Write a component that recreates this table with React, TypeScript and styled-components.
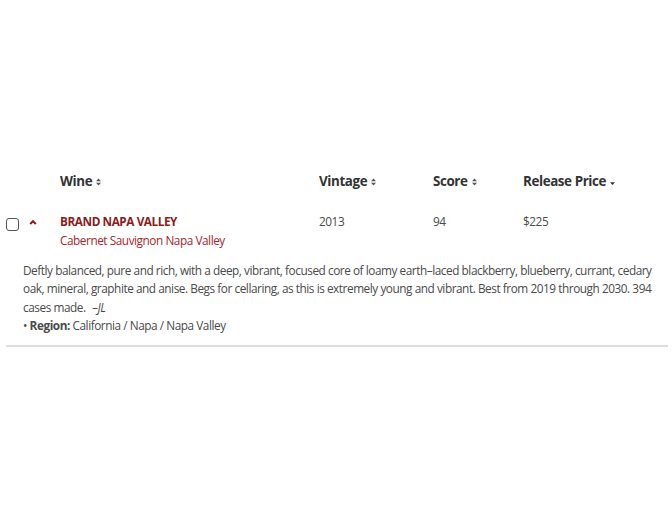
import React from 'react'
import styled, { createGlobalStyle } from 'styled-components'

const GlobalStyle = createGlobalStyle`
  html, body {
    margin: 0;
    padding: 0;
    background: #ffffff;
    font-family: 'Open Sans', 'Liberation Sans', sans-serif;
  }
`

const Page = styled.div`
  width: 672px;
  height: 510px;
  padding: 168px 4px 0 6px;
  box-sizing: border-box;
`

const Row = styled.div`
  display: grid;
  grid-template-columns: 23px 31px 259px 114px 90px 1fr;
  align-items: start;
`

const HeaderRow = styled(Row)`
  height: 40px;
`

const HeadCell = styled.div`
  font-size: 13.4px;
  letter-spacing: -0.4px;
  font-weight: 700;
  color: #333333;
  line-height: 26px;
  display: flex;
  align-items: center;
  white-space: nowrap;
`

const SortIcon = styled.svg`
  margin-left: 4px;
  margin-top: 1px;
`

const Cell = styled.div`
  font-size: 11.8px;
  letter-spacing: -0.45px;
  color: #4a4a4a;
  line-height: 19px;
  padding-top: 3.5px;
`

const CheckCell = styled.div`
  padding-top: 10px;
`

const Checkbox = styled.span`
  display: block;
  width: 13px;
  height: 13px;
  box-sizing: border-box;
  border: 1.5px solid #555555;
  border-radius: 3px;
`

const ChevronCell = styled.div`
  padding-top: 11px;

  svg {
    display: block;
  }
`

const WineName = styled.div`
  font-weight: 700;
  color: #8b1c1c;
`

const Variety = styled.div`
  color: #a3262a;
`

const Details = styled.div`
  padding: 11px 0 10px 17px;
  font-size: 11.8px;
  letter-spacing: -0.45px;
  line-height: 18.5px;
  color: #4a4a4a;
`

const Note = styled.p`
  margin: 0;
`

const Initials = styled.em`
  margin-left: 4px;
`

const Divider = styled.hr`
  margin: 0;
  border: none;
  border-top: 2px solid #dddddd;
`

const SortBoth = () => (
  <SortIcon width="5" height="8" viewBox="0 0 5 8">
    <path d="M0 3.3 L2.5 0.5 L5 3.3 Z" fill="#555" />
    <path d="M0 4.7 L2.5 7.5 L5 4.7 Z" fill="#555" />
  </SortIcon>
)

const SortDown = () => (
  <SortIcon width="5" height="8" viewBox="0 0 5 8">
    <path d="M0 4.3 L2.5 7 L5 4.3 Z" fill="#333" />
  </SortIcon>
)

const App = () => {
  return (
    <>
      <GlobalStyle />
      <Page>
        <HeaderRow>
          <div />
          <div />
          <HeadCell>
            Wine <SortBoth />
          </HeadCell>
          <HeadCell>
            Vintage <SortBoth />
          </HeadCell>
          <HeadCell>
            Score <SortBoth />
          </HeadCell>
          <HeadCell>
            Release Price <SortDown />
          </HeadCell>
        </HeaderRow>
        <Row>
          <CheckCell>
            <Checkbox />
          </CheckCell>
          <ChevronCell>
            <svg width="8" height="6" viewBox="0 0 8 6">
              <path d="M1.2 5 L4 2.2 L6.8 5" fill="none" stroke="#8b1c1c" strokeWidth="2" />
            </svg>
          </ChevronCell>
          <Cell>
            <WineName>BRAND NAPA VALLEY</WineName>
            <Variety>Cabernet Sauvignon Napa Valley</Variety>
          </Cell>
          <Cell>2013</Cell>
          <Cell>94</Cell>
          <Cell>$225</Cell>
        </Row>
        <Details>
          <Note>
            Deftly balanced, pure and rich, with a deep, vibrant, focused core of loamy
            earth–laced blackberry, blueberry, currant, cedary oak, mineral, graphite and
            anise. Begs for cellaring, as this is extremely young and vibrant. Best from
            2019 through 2030. 394 cases made. <Initials>–JL</Initials>
          </Note>
          <Note>
            • <b>Region:</b> California / Napa / Napa Valley
          </Note>
        </Details>
        <Divider />
      </Page>
    </>
  )
}

export default App
